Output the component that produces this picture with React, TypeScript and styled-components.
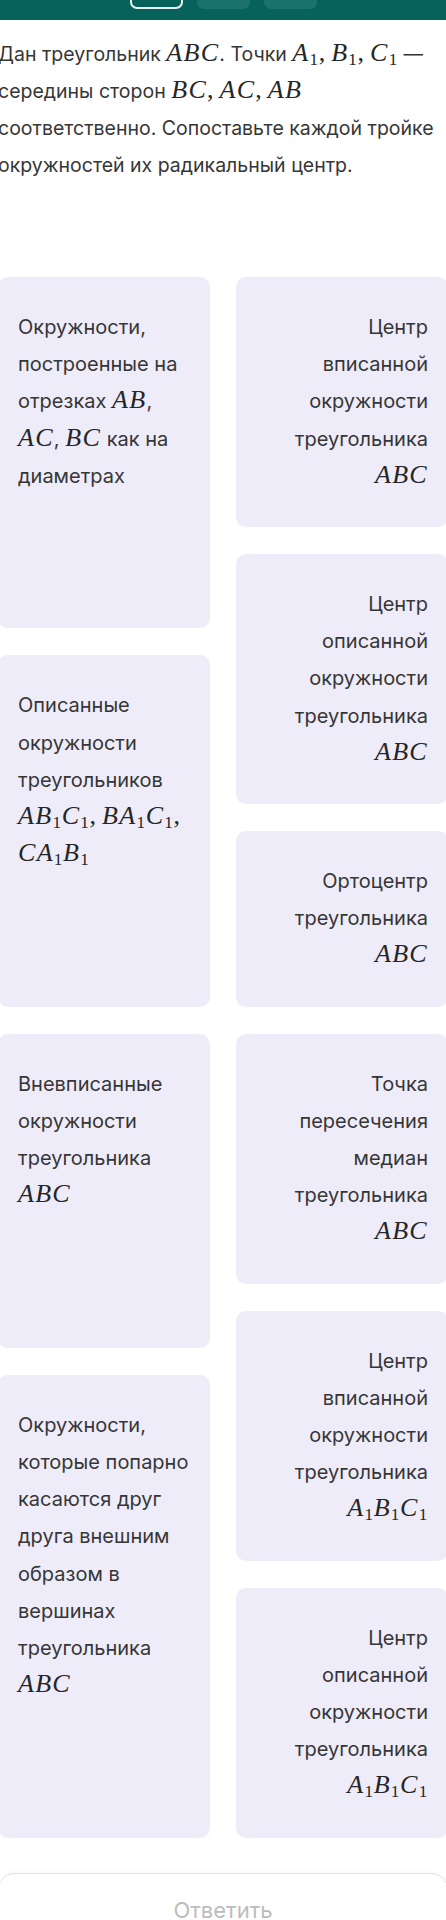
import React from "react";
import styled, { createGlobalStyle } from "styled-components";

const GlobalStyle = createGlobalStyle`
    html, body {
        margin: 0;
        padding: 0;
        background: #ffffff;
        overflow-x: hidden;
    }

    body {
        font-family: Inter, "Noto Sans", sans-serif;
        color: #363636;
    }
`

const Page = styled.div`
    width: 450px;
    margin-left: -2px;
`

const TopBar = styled.div`
    box-sizing: border-box;
    height: 20px;
    padding-bottom: 11px;
    background-color: #07625c;
    display: flex;
    justify-content: center;
    align-items: flex-end;
    gap: 14px;
    overflow: hidden;
`

const Tab = styled.div<{ $active?: boolean }>`
    box-sizing: border-box;
    flex: 0 0 auto;
    width: 53px;
    height: 36px;
    border-radius: 7px;
    background-color: ${p => p.$active ? "#07625c" : "#1c726c"};
    border: ${p => p.$active ? "2px solid #e6f2f1" : "none"};
`

const Intro = styled.div`
    padding-top: 16px;
    font-size: 19.5px;
    line-height: 37px;
`

const Line = styled.div`
    white-space: nowrap;
`

const Grid = styled.div`
    margin-top: 93px;
    display: grid;
    grid-template-columns: 1fr 1fr;
    column-gap: 26px;
`

const Column = styled.div`
    display: flex;
    flex-direction: column;
    gap: 27px;
`

const Card = styled.div<{ $right?: boolean }>`
    flex: ${p => p.$right ? "0 0 auto" : "1 0 auto"};
    background-color: #efecf9;
    border-radius: 10px;
    padding: 32px 20px;
    font-size: 20px;
    line-height: 37.2px;
    text-align: ${p => p.$right ? "right" : "left"};
`

const Math = styled.span`
    font-family: "Liberation Serif", "Times New Roman", serif;
    font-style: italic;
    font-size: 26px;
    line-height: 1;
    letter-spacing: 0.05em;
    color: #262626;
`

const Sub = styled.span`
    font-style: normal;
    font-size: 0.66em;
    line-height: 0;
    vertical-align: -0.22em;
    letter-spacing: 0;
    margin-right: 0.04em;
`

const Comma = styled.span`
    font-family: "Liberation Serif", serif;
    font-style: normal;
    margin-right: 0.18em;
`

const AnswerButton = styled.button`
    box-sizing: border-box;
    display: flex;
    align-items: center;
    justify-content: center;
    width: 100%;
    height: 74px;
    margin-top: 35px;
    background: #ffffff;
    border: 1px solid #e2e2e2;
    border-radius: 16px;
    box-shadow: 0 -6px 8px -6px rgba(0, 0, 0, 0.04);
    font-family: Inter, "Noto Sans", sans-serif;
    font-size: 22px;
    color: #bcbcbc;
`

const ABC = <Math>ABC</Math>
const A1B1C1 = <Math>A<Sub>1</Sub>B<Sub>1</Sub>C<Sub>1</Sub></Math>

const leftCards: React.ReactNode[][] = [
    ["Окружности,", "построенные на", <>отрезках <Math>AB</Math>,</>, <><Math>AC</Math>, <Math>BC</Math> как на</>, "диаметрах"],
    ["Описанные", "окружности", "треугольников",
        <Math>AB<Sub>1</Sub>C<Sub>1</Sub><Comma>,</Comma>BA<Sub>1</Sub>C<Sub>1</Sub><Comma>,</Comma></Math>,
        <Math>CA<Sub>1</Sub>B<Sub>1</Sub></Math>],
    ["Вневписанные", "окружности", "треугольника", ABC],
    ["Окружности,", "которые попарно", "касаются друг", "друга внешним", "образом в", "вершинах", "треугольника", ABC],
]

const rightCards: React.ReactNode[][] = [
    ["Центр", "вписанной", "окружности", "треугольника", ABC],
    ["Центр", "описанной", "окружности", "треугольника", ABC],
    ["Ортоцентр", "треугольника", ABC],
    ["Точка", "пересечения", "медиан", "треугольника", ABC],
    ["Центр", "вписанной", "окружности", "треугольника", A1B1C1],
    ["Центр", "описанной", "окружности", "треугольника", A1B1C1],
]

const App = () => {
    return (
        <>
            <GlobalStyle />
            <Page>
                <TopBar>
                    <Tab $active />
                    <Tab />
                    <Tab />
                </TopBar>

                <Intro>
                    <Line>
                        Дан треугольник {ABC}. Точки <Math>A<Sub>1</Sub><Comma>,</Comma>B<Sub>1</Sub><Comma>,</Comma>C<Sub>1</Sub></Math> —
                    </Line>
                    <Line>
                        середины сторон <Math>BC<Comma>,</Comma>AC<Comma>,</Comma>AB</Math>
                    </Line>
                    <Line>соответственно. Сопоставьте каждой тройке</Line>
                    <Line>окружностей их радикальный центр.</Line>
                </Intro>

                <Grid>
                    <Column>
                        {leftCards.map((lines, i) =>
                            <Card key={i}>
                                {lines.map((l, j) => <Line key={j}>{l}</Line>)}
                            </Card>
                        )}
                    </Column>
                    <Column>
                        {rightCards.map((lines, i) =>
                            <Card $right key={i}>
                                {lines.map((l, j) => <Line key={j}>{l}</Line>)}
                            </Card>
                        )}
                    </Column>
                </Grid>

                <AnswerButton>Ответить</AnswerButton>
            </Page>
        </>
    )
}

export default App
